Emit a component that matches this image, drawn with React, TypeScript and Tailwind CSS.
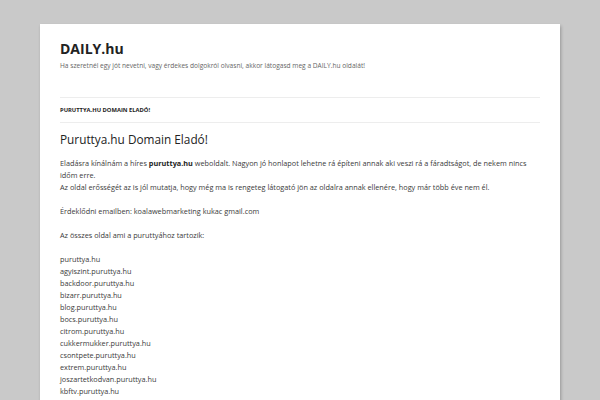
import React from 'react';

const subdomains = [
  'puruttya.hu',
  'agyiszint.puruttya.hu',
  'backdoor.puruttya.hu',
  'bizarr.puruttya.hu',
  'blog.puruttya.hu',
  'bocs.puruttya.hu',
  'citrom.puruttya.hu',
  'cukkermukker.puruttya.hu',
  'csontpete.puruttya.hu',
  'extrem.puruttya.hu',
  'joszartetkodvan.puruttya.hu',
  'kbftv.puruttya.hu',
  'lakkozott.puruttya.hu',
  'lol.puruttya.hu',
];

export default function App() {
  return (
    <div className="h-[400px] overflow-hidden bg-[#c9c9c9] pt-6 font-['Open_Sans',sans-serif]">
      <div className="mx-10 bg-white px-5 shadow-[1px_2px_3px_rgba(0,0,0,0.25)]">
        {/* HEADER */}
        <header className="pt-[14px]">
          <h1 className="text-[14px] font-bold leading-[22px] text-[#222]">DAILY.hu</h1>
          <h2 className="text-[6.6px] leading-[12px] text-[#666]">
            Ha szeretnél egy jót nevetni, vagy érdekes dolgokról olvasni, akkor látogasd meg a DAILY.hu oldalát!
          </h2>
          <nav className="mt-[25px] border-y border-[#ededed] py-[6px] text-[5.8px] font-bold uppercase leading-[12px] text-[#222]">
            Puruttya.hu Domain Eladó!
          </nav>
        </header>

        {/* CONTENT */}
        <main className="pt-[7px] pb-6 text-[7.3px] leading-[12px] text-[#3a3a3a]">
          <h1 className="text-[11.8px] leading-[18px] text-[#222]">Puruttya.hu Domain Eladó!</h1>
          <p className="mt-[9px]">
            Eladásra kínálnám a híres <strong className="font-bold text-[#222]">puruttya.hu</strong> weboldalt. Nagyon jó
            honlapot lehetne rá építeni annak aki veszi rá a fáradtságot, de nekem nincs időm erre.
            <br />
            Az oldal erősségét az is jól mutatja, hogy még ma is rengeteg látogató jön az oldalra annak ellenére, hogy
            már több éve nem él.
          </p>
          <p className="mt-[12px]">Érdeklődni emailben: koalawebmarketing kukac gmail.com</p>
          <p className="mt-[12px]">Az összes oldal ami a puruttyához tartozik:</p>
          <ul className="mt-[12px]">
            {subdomains.map((d) => (
              <li key={d}>{d}</li>
            ))}
          </ul>
        </main>
      </div>
    </div>
  );
}
